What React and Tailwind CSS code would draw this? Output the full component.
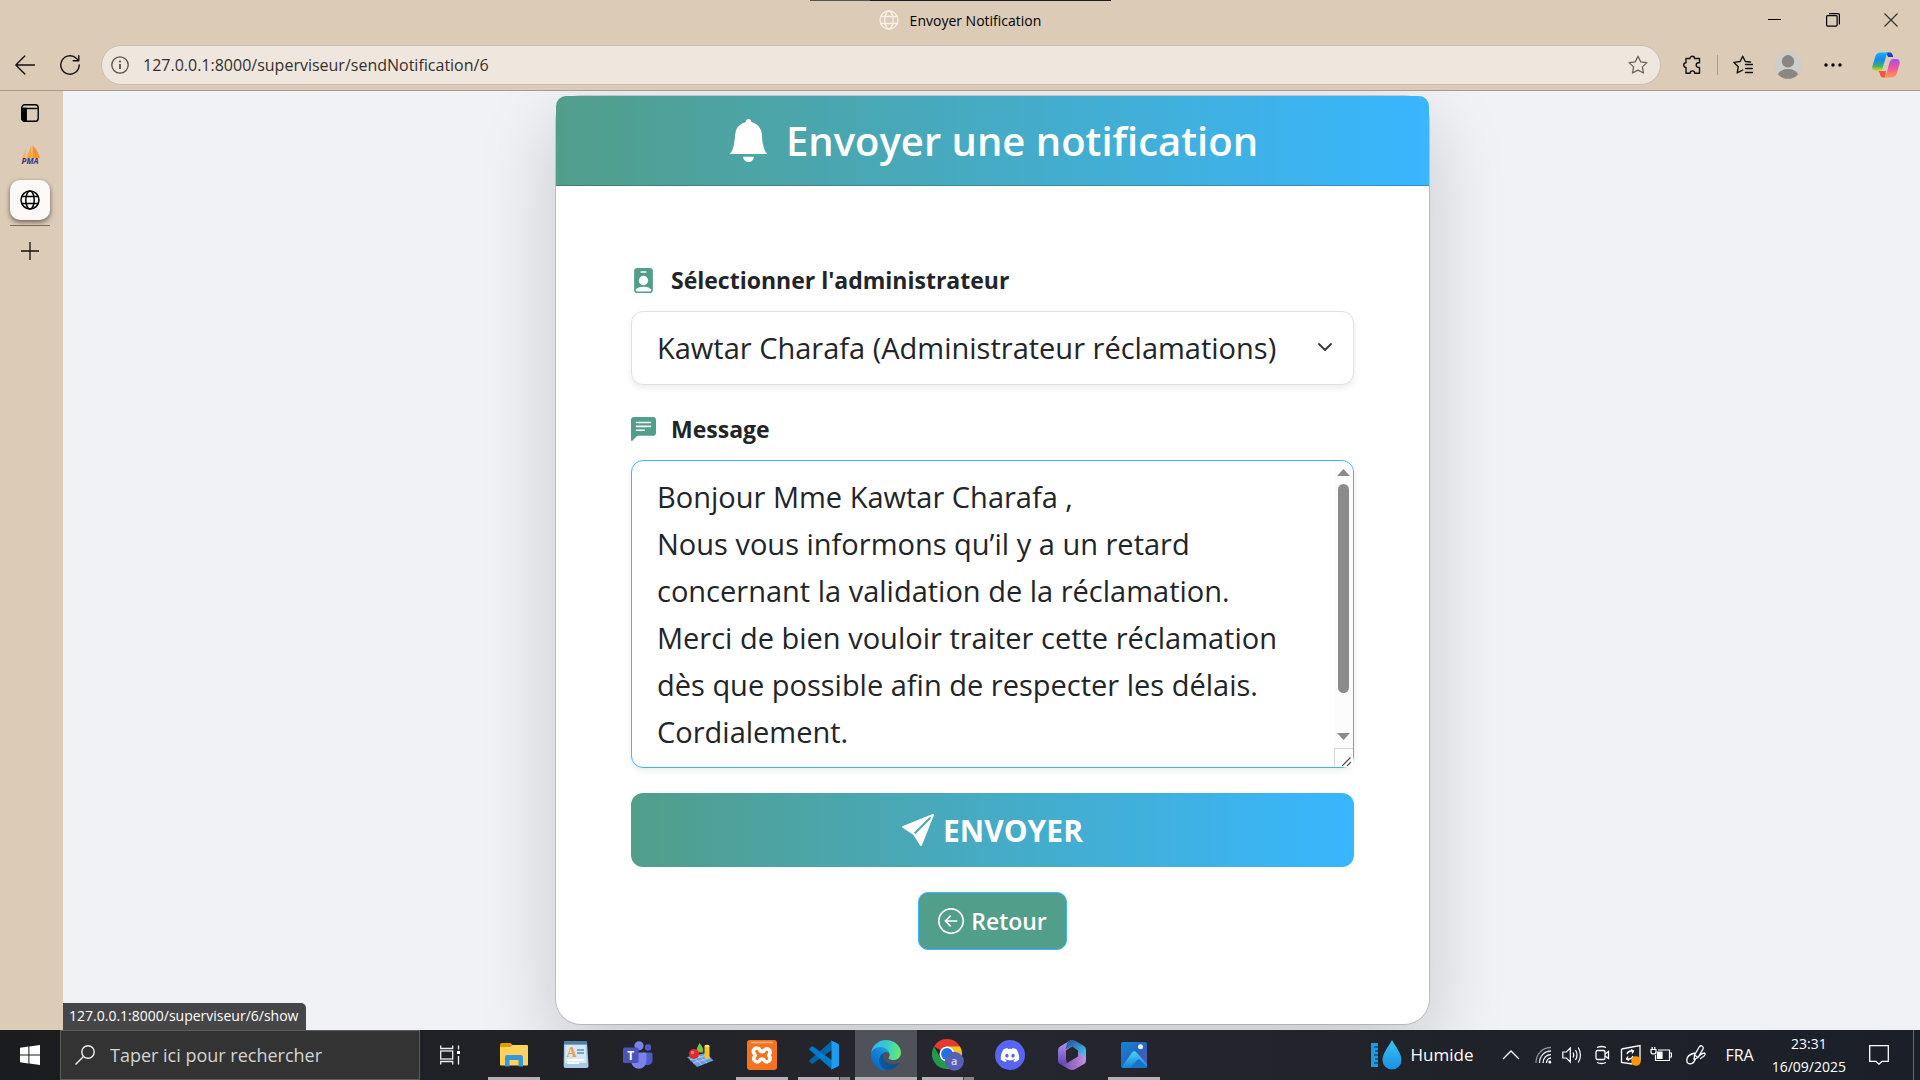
import React from "react";
import {
  BsBellFill,
  BsPersonBadgeFill,
  BsChatLeftTextFill,
  BsSendFill,
  BsArrowLeftCircle,
} from "react-icons/bs";
import { FaDiscord } from "react-icons/fa";

/* ---------- Browser icons ---------- */

const Globe = ({ className, width = 1.5 }) => (
  <svg viewBox="0 0 20 20" className={className} fill="none" stroke="currentColor" strokeWidth={width}>
    <circle cx="10" cy="10" r="9" />
    <ellipse cx="10" cy="10" rx="4.2" ry="9" />
    <path d="M1.8 6.5h16.4M1.8 13.5h16.4" />
  </svg>
);

const BackIcon = () => (
  <svg viewBox="0 0 20 20" className="size-5" fill="none" stroke="currentColor" strokeWidth="1.3" strokeLinecap="round" strokeLinejoin="round">
    <path d="M19.5 10H.8M9.8 1 .8 10l9 9" />
  </svg>
);

const RefreshIcon = () => (
  <svg viewBox="0 0 20 20" className="size-5" fill="none" stroke="currentColor" strokeWidth="1.4" strokeLinecap="round" strokeLinejoin="round">
    <path d="M19.2 10A9.2 9.2 0 1 1 16.5 3.5L18.6 5.6M18.8.8v5h-5.6" />
  </svg>
);

const InfoIcon = () => (
  <svg viewBox="0 0 18 18" className="size-[18px] text-[#55504b]" fill="none" stroke="currentColor" strokeWidth="1.3">
    <circle cx="9" cy="9" r="8.2" />
    <path d="M9 8v5" strokeWidth="1.8" />
    <circle cx="9" cy="5.5" r="1.1" fill="currentColor" stroke="none" />
  </svg>
);

const StarIcon = () => (
  <svg viewBox="0 0 20 20" className="size-5 text-[#6b645d]" fill="none" stroke="currentColor" strokeWidth="1.3" strokeLinejoin="round">
    <path d="m10 1.2 2.7 5.6 6.2.8-4.5 4.3 1.1 6.1L10 15.1 4.500 18l1.100-6.100L1.100 7.600l6.200-.8z" />
  </svg>
);

const PuzzleIcon = () => (
  <svg viewBox="0 0 20 20" className="size-5" fill="none" stroke="currentColor" strokeWidth="1.4" strokeLinejoin="round">
    <path d="M4 3.500h4a2.300 2.300 0 1 1 4.600 0H17.500v4.300h-1a2.300 2.300 0 0 0 0 4.600h1v5.800H12.700a2.200 2.200 0 0 0-4.600 0H4v-5.800a2.300 2.300 0 1 1 0-4.600z" />
  </svg>
);

const FavoritesIcon = () => (
  <svg viewBox="0 0 20 20" className="size-5" fill="none" stroke="currentColor" strokeWidth="1.4" strokeLinejoin="round" strokeLinecap="round">
    <path d="M17.500 7 12.300 6.500 9.700 1.200 7.100 6.500.9 7.400l4.400 4.300-1.100 6.200 5.500-2.900M12.500 9.500h7M12.500 13.500h7M12.500 17.500h7" />
  </svg>
);

const CopilotIcon = () => (
  <svg viewBox="0 0 28 28" className="size-7">
    <defs>
      <linearGradient id="cp1" x1="0" y1="0" x2="0" y2="1">
        <stop offset="0" stopColor="#12b5f5" />
        <stop offset=".4" stopColor="#1a86e8" />
        <stop offset=".75" stopColor="#3fb56a" />
        <stop offset="1" stopColor="#f5cf1c" />
      </linearGradient>
      <linearGradient id="cp2" x1="0" y1="0" x2="0" y2="1">
        <stop offset="0" stopColor="#a34df0" />
        <stop offset=".5" stopColor="#f0569a" />
        <stop offset="1" stopColor="#ff9a4f" />
      </linearGradient>
    </defs>
    <path d="M14 1.500h4c1.800 0 2.500 1.500 3.200 4.500h-5z" fill="#1b3fcb" />
    <path d="M8.500 1.500h8.500c-2 .8-2.500 2.500-3.200 5l-3 10c-.8 2.500-2 3.500-4 3.500H3.500C.4 20-.2 17.300.6 14.500L3.500 5c.8-2.300 2.500-3.500 5-3.500z" fill="url(#cp1)" />
    <path d="M6.500 20h7.500l-1 6.500h-1.500c-2.500 0-3-1-3.500-3-.4-1.800-.7-2.800-1.500-3.500z" fill="#f4553d" />
    <path d="M19.500 26.500H11.500c2-.8 2.500-2.500 3.200-5l2.800-10c.8-2.500 2-3.500 4-3.500h3c3.100 0 3.700 2.700 2.900 5.500l-2.900 9.500c-.8 2.300-2.500 3.500-5 3.500z" fill="url(#cp2)" />
  </svg>
);

const TabsIcon = () => (
  <svg viewBox="0 0 18 18" className="size-[18px]" fill="none" stroke="currentColor" strokeWidth="1.400">
    <rect x=".8" y=".8" width="16.400" height="16.400" rx="2.800" />
    <path d="M1 4.500h16" />
    <path d="M1 4.500h4.200V17H3a2 2 0 0 1-2-2z" fill="currentColor" />
  </svg>
);

const PmaIcon = () => (
  <svg viewBox="0 0 20 20" className="size-5">
    <path d="M6.500 2.500 2 13h3.200z" fill="#f9b35c" />
    <path d="M11.300.5 6.300 13h5.500z" fill="#f8a43f" />
    <path d="M12.500.5v12.800h7.200C18.800 8 16 3.500 12.500.5z" fill="#f7932b" />
    <text x="10" y="19.300" textAnchor="middle" fontFamily="Open Sans, sans-serif" fontWeight="700" fontStyle="italic" fontSize="8" fill="#33337c">PMA</text>
  </svg>
);

/* ---------- Taskbar icons ---------- */

const ExplorerIcon = () => (
  <svg viewBox="0 0 28 24" className="h-6 w-7">
    <path d="M0 1.500Q0 0 1.500 0h9l2.500 2.500L11 5H0z" fill="#e09c00" />
    <path d="M0 4h10l2.500-2H27q1 0 1 1v18.500q0 1-1 1H1q-1 0-1-1z" fill="#ffd25c" />
    <path d="M5 23.500V14q0-2 2-2h14q2 0 2 2v9.500h-4.500V17h-9v6.500z" fill="#3796e0" />
  </svg>
);

const WordpadIcon = () => (
  <svg viewBox="0 0 26 28" className="h-7 w-[26px]">
    <path d="M1 1h23l1.500 24q0 2-2 2H2.500Q.5 27 .7 25z" fill="#a9cbe6" />
    <path d="M2.500 4h20l1 18H2z" fill="#d5e8f6" />
    <path d="M1 0h23v3.500H1z" fill="#4d7fa8" />
    <text x="8.500" y="16" textAnchor="middle" fontFamily="Liberation Serif, serif" fontWeight="700" fontSize="14" fill="#f19a3e">A</text>
    <path d="M14 9h7M14 12h7" stroke="#5a93c4" strokeWidth="1.500" />
    <path d="M4 19h17M4 22h12" stroke="#fff" strokeWidth="1.800" />
  </svg>
);

const TeamsIcon = () => (
  <svg viewBox="0 0 30 28" className="h-7 w-[30px]">
    <circle cx="25" cy="6.500" r="3.200" fill="#5059c9" />
    <path d="M20 11.500h8q1.500 0 1.500 1.500v6.500a4.800 4.800 0 0 1-8 3.500z" fill="#5059c9" />
    <circle cx="16" cy="4.800" r="4.600" fill="#7b83eb" />
    <path d="M9 11.500h13q1.500 0 1.500 1.500v7a7.700 7.700 0 0 1-15.400 0z" fill="#7b83eb" />
    <rect y="6.500" width="15.500" height="15.500" rx="1.500" fill="#4b53bc" />
    <text x="7.700" y="18.500" textAnchor="middle" fontFamily="Open Sans, sans-serif" fontWeight="700" fontSize="12" fill="#fff">T</text>
  </svg>
);

const ShapesIcon = () => (
  <svg viewBox="0 0 28 26" className="h-[26px] w-7">
    <path d="M1 15 20 11l7.500 7.500L11 25z" fill="#6e9be0" />
    <path d="m6 14 10 9M12 13l9 8M4 18l17-5M7 21l17-5" stroke="#b8d0f5" strokeWidth=".8" />
    <path d="M13.500 1c3 3 4.500 7 3.500 9.500h-6C10 7 12 4 13.500 1z" fill="#7cc13c" />
    <circle cx="8" cy="12" r="5" fill="#e02b2b" />
    <circle cx="6.500" cy="10.500" r="1.800" fill="#f47a70" />
    <path d="M18.500 4q2.500-1.500 5 0v12q-2.500 1.600-5 0z" fill="#f1c232" />
    <ellipse cx="21" cy="4" rx="2.500" ry="1.200" fill="#f9e27b" />
  </svg>
);

const XamppIcon = () => (
  <svg viewBox="0 0 30 30" className="size-[30px]">
    <rect width="30" height="30" rx="3" fill="#f37321" />
    <path d="M4 2.500h22" stroke="#fbb27c" strokeWidth="1.500" />
    <path
      d="M10 8.200a3.200 3.200 0 0 0-3 5l1.200 2.200L7 17.500a3.300 3.300 0 1 0 6.300 2q1.700-1 3.400 0a3.300 3.300 0 1 0 6.300-2l-1.200-2.100 1.200-2.200a3.300 3.300 0 1 0-6.300-2q-1.700 1-3.400 0a3.300 3.300 0 0 0-3.300-3z"
      fill="none"
      stroke="#fff"
      strokeWidth="3.600"
      strokeLinejoin="round"
    />
  </svg>
);

const VsCodeIcon = () => (
  <svg viewBox="0 0 30 30" className="size-[30px]">
    <path d="m29 3.700-6.200-3L.8 20.100q-1.100 1 0 2l1.700 1.500q.7.500 1.500 0L30 4.800z" fill="#0065a9" />
    <path d="m29 26.300-6.200 3L.8 9.900q-1.100-1 0-2l1.700-1.500q.7-.5 1.500 0L30 25.200z" fill="#007acc" />
    <path d="M22.800 29.300q-.9.300-1.500-.4c.8.800 1.200.4 1.200-.8V1.900c0-1.200-.4-1.600-1.200-.8q.6-.7 1.500-.4l6.200 3q1 .5 1 1.700v19.200q0 1.200-1 1.700z" fill="#1f9cf0" />
  </svg>
);

const EdgeIcon = () => (
  <svg viewBox="0 0 256 256" className="size-[30px]">
    <defs>
      <linearGradient id="ed1" x1="63" y1="177" x2="241" y2="177" gradientUnits="userSpaceOnUse">
        <stop offset="0" stopColor="#0c59a4" />
        <stop offset="1" stopColor="#114a8b" />
      </linearGradient>
      <linearGradient id="ed2" x1="157" y1="100" x2="46" y2="222" gradientUnits="userSpaceOnUse">
        <stop offset="0" stopColor="#1b9de2" />
        <stop offset=".5" stopColor="#1180d4" />
        <stop offset="1" stopColor="#0a6cc4" />
      </linearGradient>
      <linearGradient id="ed3" x1="20" y1="60" x2="250" y2="110" gradientUnits="userSpaceOnUse">
        <stop offset="0" stopColor="#35b6ee" />
        <stop offset=".5" stopColor="#36cfc5" />
        <stop offset="1" stopColor="#66eb6e" />
      </linearGradient>
    </defs>
    <path d="M235.680 195.460a93.730 93.730 0 0 1-10.540 4.710 101.870 101.870 0 0 1-35.900 6.460c-47.320 0-88.540-32.550-88.540-74.320A31.480 31.480 0 0 1 117.130 105c-42.800 1.800-53.800 46.400-53.800 72.530 0 73.880 68.090 78.370 82.760 78.370 7.910 0 19.840-2.300 27-4.560l1.310-.44a128.340 128.340 0 0 0 66.600-49.800 4 4 0 0 0-5.320-5.640z" fill="url(#ed1)" />
    <path d="M105.730 241.420a79.200 79.200 0 0 1-22.740-21.340 80.720 80.720 0 0 1 29.530-116c3.120-1.470 8.450-4.130 15.540-4a32.350 32.350 0 0 1 25.690 13 31.880 31.880 0 0 1 6.360 18.660c0-.21 24.460-79.600-80-79.600-43.900 0-80 41.660-80 78.210a130.150 130.150 0 0 0 12.110 56 128 128 0 0 0 156.380 67.110 75.550 75.550 0 0 1-62.780-8z" fill="url(#ed2)" />
    <path d="M152.330 148.860c-.81 1.050-3.300 2.500-3.300 5.660 0 2.610 1.700 5.120 4.720 7.230 14.380 10 41.490 8.680 41.560 8.680a59.560 59.560 0 0 0 30.270-8.350A61.380 61.380 0 0 0 255.810 109.140c.26-22.410-8-37.310-11.340-43.910C223.320 23.770 177.580 0 128 0A128 128 0 0 0 0 126.200c.48-36.540 36.800-66.050 80-66.050 3.500 0 23.460.34 42 10.070 16.340 8.580 24.900 18.940 30.850 29.210 6.180 10.670 7.280 24.150 7.280 29.520s-2.680 13.330-7.800 19.910z" fill="url(#ed3)" />
  </svg>
);

const ChromeIcon = () => (
  <svg viewBox="0 0 32 32" className="size-8">
    <path d="M15 15 2 7.500A15 15 0 0 1 28 7.500z" fill="#e33b2e" />
    <path d="M2 7.500A15 15 0 0 0 15 30l6.500-11.200L8.500 18.700z" fill="#229a4a" />
    <path d="M28 7.500H15l6.500 11.300L15 30A15 15 0 0 0 28 7.500z" fill="#fcc31e" />
    <circle cx="15" cy="15" r="7.500" fill="#fff" />
    <circle cx="15" cy="15" r="5.900" fill="#1a73e8" />
    <circle cx="22.300" cy="22.200" r="9.500" fill="#5560b8" />
    <text x="22.300" y="25.500" textAnchor="middle" fontFamily="Open Sans, sans-serif" fontSize="11" fontWeight="600" fill="#d5d8f0">a</text>
  </svg>
);

const DiscordIcon = () => (
  <span className="flex size-[30px] items-center justify-center rounded-full bg-[#5865f2]">
    <FaDiscord className="size-5 text-white" />
  </span>
);

const M365Icon = () => (
  <svg viewBox="0 0 28 30" className="h-[30px] w-7">
    <defs>
      <linearGradient id="m1" x1="0" y1="0" x2="0" y2="1">
        <stop offset="0" stopColor="#b79cf0" />
        <stop offset="1" stopColor="#5d3fb5" />
      </linearGradient>
      <linearGradient id="m2" x1="0" y1="0" x2="1" y2="1">
        <stop offset="0" stopColor="#1b4f9c" />
        <stop offset="1" stopColor="#56cdfa" />
      </linearGradient>
      <linearGradient id="m3" x1="0" y1="0" x2="1" y2="0">
        <stop offset="0" stopColor="#6d4bb0" />
        <stop offset="1" stopColor="#c690dd" />
      </linearGradient>
    </defs>
    <path d="M13 0 2 6.500Q0 7.800 0 10v10.500Q0 23 2 24l5 2.500q3-3 1-7V10.500L16 5z" fill="url(#m1)" />
    <path d="M11 .8q3-1.600 6 0l9 5.200q2 1.300 2 3.500v9l-8-4v-4L13.500 6 8 9.500q0-6 3-8.700z" fill="url(#m2)" />
    <path d="M28 17v3.500q0 2.500-2 3.500l-9 5.200q-3 1.600-6 0L3 24.500q3.500 1 6-1.500l11-6.500v-4z" fill="url(#m3)" />
  </svg>
);

const PhotosIcon = () => (
  <svg viewBox="0 0 26 26" className="size-[26px]">
    <defs>
      <linearGradient id="ph1" x1="0" y1="0" x2="1" y2="1">
        <stop offset="0" stopColor="#1488d8" />
        <stop offset=".5" stopColor="#2367bd" />
        <stop offset="1" stopColor="#7350b0" />
      </linearGradient>
      <linearGradient id="ph2" x1="0" y1="0" x2="0" y2="1">
        <stop offset="0" stopColor="#4fd0fb" />
        <stop offset="1" stopColor="#1580d6" />
      </linearGradient>
    </defs>
    <rect width="26" height="26" rx="2" fill="url(#ph1)" />
    <path d="m1 24.500 10-14q2-2.500 4.500 0L26 22v2q0 2-2 2H2q-.8 0-1-1.500z" fill="url(#ph2)" />
    <path d="m9 26 7-8q1.500-1.500 3.200 0l6 6.500q-.3 1.500-1.200 1.500z" fill="#1a72c8" />
    <circle cx="19.500" cy="4.800" r="2.500" fill="#e8f4ff" />
  </svg>
);

const apps = [
  { name: "Explorateur de fichiers", Icon: ExplorerIcon, state: "open" },
  { name: "WordPad", Icon: WordpadIcon },
  { name: "Teams", Icon: TeamsIcon },
  { name: "Formes", Icon: ShapesIcon },
  { name: "XAMPP", Icon: XamppIcon, state: "open" },
  { name: "Visual Studio Code", Icon: VsCodeIcon, state: "multi" },
  { name: "Edge", Icon: EdgeIcon, state: "active" },
  { name: "Chrome", Icon: ChromeIcon, state: "multi" },
  { name: "Discord", Icon: DiscordIcon },
  { name: "Microsoft 365", Icon: M365Icon },
  { name: "Photos", Icon: PhotosIcon, state: "open" },
];

const MESSAGE = `Bonjour Mme Kawtar Charafa ,
Nous vous informons qu’il y a un retard concernant la validation de la réclamation.
Merci de bien vouloir traiter cette réclamation dès que possible afin de respecter les délais.
Cordialement.`;

/* ---------- Browser chrome ---------- */

function TitleBar() {
  return (
    <header className="relative grid h-10 grid-cols-[1fr_auto_1fr] items-center">
      <div className="absolute inset-x-0 top-0 mx-auto flex h-px w-[301px] bg-[#1c1c24]">
        <span className="w-[60px] bg-[#55555a]" />
      </div>
      <span />
      <div className="flex items-center gap-[11px] text-black">
        <Globe className="size-5 text-[#f7f1ea]" width={1.3} />
        <span className="text-[14px]">Envoyer Notification</span>
      </div>
      <div className="flex items-center justify-end self-stretch">
        <button aria-label="Réduire" className="flex h-full w-[58px] items-center justify-center">
          <svg viewBox="0 0 14 14" className="size-[14px]" stroke="#000"><path d="M0 6.500h13" /></svg>
        </button>
        <button aria-label="Restaurer" className="flex h-full w-[58px] items-center justify-center">
          <svg viewBox="0 0 14 14" className="size-[14px]" stroke="#000" fill="none" strokeWidth="1.200">
            <rect x=".6" y="2.600" width="10.500" height="10.500" rx="1" />
            <path d="M3 .6h9q1.400 0 1.400 1.400v9.500" />
          </svg>
        </button>
        <button aria-label="Fermer" className="flex h-full w-[58px] items-center justify-center">
          <svg viewBox="0 0 14 14" className="size-[14px]" stroke="#333" strokeWidth="1.200"><path d="m.5.5 13 13m0-13-13 13" /></svg>
        </button>
      </div>
    </header>
  );
}

function Toolbar() {
  return (
    <nav className="flex h-[51px] items-center border-b border-[#ad9a85] pr-5 pl-[15px] text-[#111]">
      <button aria-label="Précédent" className="mr-[25px]"><BackIcon /></button>
      <button aria-label="Actualiser" className="mr-[21px]"><RefreshIcon /></button>
      <div className="flex h-10 flex-1 items-center rounded-full border border-[#c6beb6] bg-[#efe7de] pr-3 pl-[9px]">
        <InfoIcon />
        <input
          aria-label="Adresse"
          defaultValue="127.0.0.1:8000/superviseur/sendNotification/6"
          className="ml-[14px] min-w-0 flex-1 bg-transparent text-[16px] text-[#33302d] outline-none"
        />
        <button aria-label="Ajouter aux favoris"><StarIcon /></button>
      </div>
      <div className="ml-[21px] flex items-center">
        <button aria-label="Extensions"><PuzzleIcon /></button>
        <span className="mx-[15px] h-5 w-px bg-[#ab9d8d]" />
        <button aria-label="Favoris"><FavoritesIcon /></button>
        <button aria-label="Profil" className="ml-[21px]">
          <svg viewBox="0 0 28 28" className="size-7">
            <circle cx="14" cy="14" r="13.800" fill="#cfcdca" />
            <circle cx="14" cy="10.300" r="6.200" fill="#8a8683" />
            <path d="M3.800 23.300Q7 18 14 18t10.200 5.300A13.800 13.800 0 0 1 3.800 23.300z" fill="#8a8683" />
          </svg>
        </button>
        <button aria-label="Paramètres" className="ml-[22px]">
          <svg viewBox="0 0 18 4" className="h-1 w-[18px]"><circle cx="2" cy="2" r="1.700" /><circle cx="9" cy="2" r="1.700" /><circle cx="16" cy="2" r="1.700" /></svg>
        </button>
        <button aria-label="Copilot" className="ml-[30px]"><CopilotIcon /></button>
      </div>
    </nav>
  );
}

function TabStrip() {
  return (
    <aside className="flex w-[63px] shrink-0 flex-col items-center pt-[13px] pr-1 text-black">
      <button aria-label="Onglets"><TabsIcon /></button>
      <button aria-label="phpMyAdmin" className="mt-[23px]"><PmaIcon /></button>
      <button aria-label="Envoyer Notification" className="mt-[15px] flex size-10 items-center justify-center rounded-[10px] bg-[#fbf8f5] shadow-[0_2px_5px_rgba(0,0,0,0.55)]">
        <Globe className="size-5" />
      </button>
      <span className="mt-[5px] h-px w-10 bg-[#776c60]" />
      <button aria-label="Nouvel onglet" className="mt-4">
        <svg viewBox="0 0 18 18" className="size-[18px]" stroke="#111" strokeWidth="1.300"><path d="M9 0v18M0 9h18" /></svg>
      </button>
    </aside>
  );
}

/* ---------- Page ---------- */

function Scrollbar() {
  return (
    <div className="pointer-events-none absolute inset-y-px right-px flex w-[19px] flex-col items-center rounded-r-xl bg-[#fcfcfc]" aria-hidden="true">
      <svg viewBox="0 0 13 7" className="mt-2 h-[7px] w-[13px]"><path d="M6.500 0 13 7H0z" fill="#8b8b8b" /></svg>
      <span className="mt-2 h-[209px] w-[11px] rounded-full bg-[#8b8b8b]" />
      <svg viewBox="0 0 13 7" className="mt-10 h-[7px] w-[13px]"><path d="M6.500 7 13 0H0z" fill="#8b8b8b" /></svg>
      <span className="mt-auto flex h-[19px] w-full items-end justify-end border-t border-l border-[#d5d5d5] bg-white pr-0.5 pb-px">
        <svg viewBox="0 0 9 9" className="size-[9px]" stroke="#444" strokeWidth="1.200"><path d="M0 9l8.500-8.500M5 9l4-4" /></svg>
      </span>
    </div>
  );
}

function NotificationForm() {
  return (
    <section className="w-full max-w-[875px] rounded-[26px] border border-black/15 bg-white bg-clip-padding shadow-[0_26px_77px_rgba(0,0,0,0.175)]">
      <h1 className="flex h-[90px] items-center justify-center gap-4 rounded-t-[10px] border-b border-black/20 bg-linear-to-r from-[#519e8a] to-[#38b6ff] bg-origin-border text-[40px] font-semibold text-white">
        <BsBellFill className="size-[43px]" />
        Envoyer une notification
      </h1>
      <form className="flex flex-col p-[75px] pb-[74px] text-[#212529]" onSubmit={(e) => e.preventDefault()}>
        <label htmlFor="admin" className="mb-3 flex h-[38px] items-center gap-[15px] text-[23px] font-bold">
          <BsPersonBadgeFill className="size-[25px] text-[#519e8a]" />
          Sélectionner l'administrateur
        </label>
        <div className="relative mb-[25px]">
          <select id="admin" className="block h-[74px] w-full appearance-none rounded-xl border border-[#dee2e6] bg-white px-[25px] text-[29px] shadow-[0_3px_6px_rgba(0,0,0,0.075)]">
            <option>Kawtar Charafa (Administrateur réclamations)</option>
          </select>
          <svg viewBox="0 0 14 8" className="pointer-events-none absolute top-8 right-[22px] h-2 w-[14px]" fill="none" stroke="#343a40" strokeWidth="1.800" strokeLinecap="round" strokeLinejoin="round">
            <path d="m1 1 6 6 6-6" />
          </svg>
        </div>
        <label htmlFor="message" className="mb-3 flex h-[38px] items-center gap-[15px] text-[23px] font-bold">
          <BsChatLeftTextFill className="size-[25px] text-[#519e8a]" />
          Message
        </label>
        <div className="relative mb-[25px]">
          <textarea
            id="message"
            rows={6}
            defaultValue={MESSAGE}
            className="block w-full resize-none overflow-hidden rounded-xl border border-[#38b6ff] bg-white py-3 pr-[40px] pl-[25px] text-[29px] leading-[47px] shadow-[0_3px_6px_rgba(0,0,0,0.075)] outline-none"
          />
          <Scrollbar />
        </div>
        <button type="submit" className="flex h-[74px] items-center justify-center gap-[9px] rounded-xl bg-linear-to-r from-[#519e8a] to-[#38b6ff] text-[30px] font-bold text-white">
          <BsSendFill className="size-8" />
          ENVOYER
        </button>
        <a href="#retour" className="mt-[25px] flex h-[58px] items-center gap-[7px] self-center rounded-[10px] border border-[#38b6ff] bg-[#519e8a] px-[19px] text-[23px] font-semibold text-white">
          <BsArrowLeftCircle className="size-[26px]" />
          Retour
        </a>
      </form>
    </section>
  );
}

/* ---------- Taskbar ---------- */

function Indicator({ state }) {
  if (!state) return null;
  if (state === "active") return <span className="absolute inset-x-0 bottom-0 h-[3px] bg-[#b5b0b5]" />;
  return (
    <span className="absolute inset-x-[5px] bottom-0 flex h-[3px] bg-[#b5b0b5]">
      {state === "multi" && <span className="ml-auto w-[11px] border-l border-[#444] bg-[#858388]" />}
    </span>
  );
}

function Tray() {
  return (
    <div className="ml-auto flex h-full items-center text-[17px] text-white">
      <svg viewBox="0 0 31 30" className="mr-[9px] h-[30px] w-[31px]">
        <defs>
          <linearGradient id="drop" x1="0" y1="0" x2="0" y2="1">
            <stop offset="0" stopColor="#39c3f3" />
            <stop offset="1" stopColor="#1a8fe3" />
          </linearGradient>
        </defs>
        <rect y="3" width="7" height="24" fill="#1f9be0" />
        <path d="M3 7h4M4 11h3M3 15h4M4 19h3M3 23h4" stroke="#0c4b84" strokeWidth="1.300" />
        <path d="M21 0c3 6 9.500 13 9.500 20a9.500 9.500 0 0 1-19 0C11.500 13 18 6 21 0z" fill="url(#drop)" />
      </svg>
      <span className="mr-[29px]">Humide</span>
      <svg viewBox="0 0 18 20" className="mr-[14px] h-5 w-[18px]" fill="none" stroke="currentColor" strokeWidth="1.300"><path d="m1 14 8-8 8 8" /></svg>
      <svg viewBox="0 0 20 20" className="size-5" fill="none" stroke="currentColor" strokeWidth="1.300">
        <path d="M2 18C2 9 8.500 2.500 17 2.500" opacity=".5" />
        <path d="M5.500 18C5.500 11 10.500 6 17 6" opacity=".9" />
        <path d="M9 18c0-5 3.500-8.500 8-8.500M12.500 18c0-3 2-5 4.500-5" />
        <circle cx="15.800" cy="17" r="1.500" fill="currentColor" stroke="none" />
      </svg>
      <svg viewBox="0 0 20 20" className="ml-2 size-5" fill="none" stroke="currentColor" strokeWidth="1.200">
        <path d="M.8 7h3.500l4-4v14l-4-4H.8zM11 7.500q1.500 2.500 0 5M13.500 5q3 5 0 10M16.200 2.500q4.500 7.500 0 15" />
      </svg>
      <svg viewBox="0 0 20 20" className="ml-2.5 size-5" fill="none" stroke="currentColor" strokeWidth="1.300">
        <rect x="4" y="5.500" width="9" height="9" rx="1.500" />
        <path d="m13 9 3.500-2.500v7L13 11M5 2.500q4.500-2 9 0M5 17.500q4.500 2 9 0" />
      </svg>
      <svg viewBox="0 0 22 22" className="ml-2 size-[22px]" fill="none" stroke="currentColor" strokeWidth="1.300">
        <path d="M1.500 5 20 1.500v15M1.500 5v13.500l11 1.500" />
        <path d="M7 10q1-3 4-3h2.500M11 5.500 13.500 7 12 9.500M13 12q-1 3-4 3H6.500M9 16.500 6.500 15 8 12.500" />
        <circle cx="16" cy="17" r="4.800" fill="#ff9500" stroke="none" />
      </svg>
      <svg viewBox="0 0 22 20" className="ml-2 h-5 w-[22px]" fill="none" stroke="currentColor" strokeWidth="1.200">
        <path d="M8 5h11.500v10.500H5.500V10M20 8h1.500v4H20M1 4.500h5v2.500q0 2-2.500 2T1 7zM2.200 4.500V2M4.800 4.500V2" />
        <path d="M7.500 7H12v6.500H7.500z" fill="currentColor" />
      </svg>
      <svg viewBox="0 0 20 20" className="ml-[14px] size-5" fill="none" stroke="currentColor" strokeWidth="1.300" strokeLinejoin="round">
        <path d="M8 14.500 8.500 10 13.500 1.500q1.500-1.300 2.800-.3t.7 2.800L12 12.500zM8.500 10l3.500 2.500M9 8Q1.500 9.500.8 14.500.6 19 4.500 18.800 8 18.300 9.500 13.700M12 12.500q2.500-4 6.500-4.500 1.500 1.500-1 3.500-2 1-3.500 2.500" />
      </svg>
      <span className="ml-[19px] text-[16px]">FRA</span>
      <time dateTime="2025-09-16T23:31" className="ml-[18px] text-center text-[14px] leading-[23px]">
        <span className="block">23:31</span>
        <span className="block">16/09/2025</span>
      </time>
      <button aria-label="Notifications" className="mr-[24px] ml-[23px]">
        <svg viewBox="0 0 20 20" className="size-5" fill="none" stroke="currentColor" strokeWidth="1.300"><path d="M.7.7h18.600v15.600h-6.300L10 19.200 7 16.300H.7z" /></svg>
      </button>
      <span className="mr-[6px] h-full w-px bg-[#63666b]" />
    </div>
  );
}

function Taskbar() {
  return (
    <footer className="flex h-[50px] shrink-0 bg-linear-to-r from-[#1b1c1f] via-[#26262e] to-[#1b1f27]">
      <button aria-label="Démarrer" className="flex w-[60px] items-center justify-center">
        <svg viewBox="0 0 20 20" className="size-5" fill="#fff"><path d="M0 2.800 8.400 1.600v8H0zM9.400 1.400 20 0v9.600H9.400zM0 10.500h8.400v8L0 17.300zM9.400 10.500H20V20L9.400 18.600z" /></svg>
      </button>
      <div className="flex w-[360px] items-center gap-[15px] border border-[#5c5c5c] bg-[#333] px-[14px]">
        <svg viewBox="0 0 20 20" className="size-5 shrink-0" fill="none" stroke="#eee" strokeWidth="1.400"><circle cx="13" cy="7" r="6.200" /><path d="M8.500 11.500.5 19.500" /></svg>
        <input aria-label="Recherche Windows" placeholder="Taper ici pour rechercher" className="min-w-0 flex-1 bg-transparent text-[18px] outline-none placeholder:text-[#d3d3d3]" />
      </div>
      <button aria-label="Affichage des tâches" className="flex w-[63px] items-center justify-center pr-[3px]">
        <svg viewBox="0 0 20 20" className="size-5" fill="none" stroke="#eee" strokeWidth="1.300">
          <path d="M.7.5v3h12v-3M.7 19.500v-3h12v3M18.500.5v4M18.500 11v8.500" /><rect x=".7" y="6" width="12" height="8" /><path d="M17 6h3v3h-3z" fill="#fff" stroke="none" />
        </svg>
      </button>
      {apps.map(({ name, Icon, state }) => (
        <button key={name} aria-label={name} className={state === "active" ? "relative flex w-[62px] items-center justify-center bg-[#50525a]" : "relative flex w-[62px] items-center justify-center"}>
          <Icon />
          <Indicator state={state} />
        </button>
      ))}
      <Tray />
    </footer>
  );
}

export default function App() {
  return (
    <div className="flex h-screen flex-col overflow-hidden bg-[#dccbb6] font-['Open_Sans',sans-serif]">
      <TitleBar />
      <Toolbar />
      <div className="flex min-h-0 flex-1">
        <TabStrip />
        <main className="relative flex flex-1 items-start justify-center overflow-hidden bg-[#f0f2f6] pt-1 pl-0.5">
          <NotificationForm />
          <div className="absolute bottom-0 left-0 rounded-tr-[5px] bg-[#464649] pr-2 pb-0.5 pl-1.5 text-[14px] leading-[25px] text-white">
            127.0.0.1:8000/superviseur/6/show
          </div>
        </main>
      </div>
      <Taskbar />
    </div>
  );
}
